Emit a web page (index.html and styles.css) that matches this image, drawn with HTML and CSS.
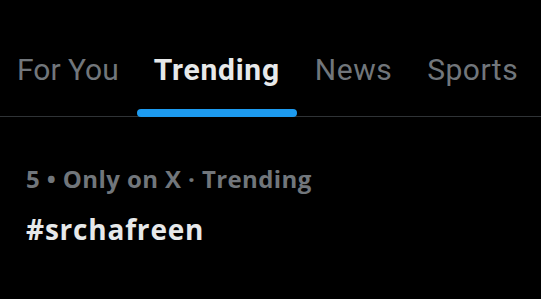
FILE: index.html
```html
<!DOCTYPE html>
<html lang="en">
<head>
<meta charset="utf-8">
<link rel="stylesheet" href="styles.css">
</head>
<body>
<nav class="tabs">
  <div class="tab">For You</div>
  <div class="tab active">Trending<span class="indicator"></span></div>
  <div class="tab">News</div>
  <div class="tab">Sports</div>
</nav>
<section class="trend">
  <div class="meta">5 • Only on X · Trending</div>
  <div class="tag">#srchafreen</div>
</section>
</body>
</html>
```
FILE: styles.css
```css
html, body {
  margin: 0;
  padding: 0;
  background: #000;
}
body {
  font-family: "Open Sans", Roboto, sans-serif;
  width: 541px;
  height: 299px;
  overflow: hidden;
}
.tabs {
  display: flex;
  gap: 35px;
  padding: 0 0 0 17px;
  height: 116px;
  border-bottom: 1px solid #2f3336;
  box-sizing: content-box;
  font-family: Roboto, "Open Sans", sans-serif;
}
.tab {
  position: relative;
  color: #71767b;
  font-size: 30px;
  line-height: 40px;
  padding-top: 50px;
  font-weight: 400;
  letter-spacing: 0.5px;
  white-space: nowrap;
}
.tab:first-child {
  letter-spacing: 0;
}
.tab.active {
  color: #e7e9ea;
  font-weight: 700;
  letter-spacing: 0.75px;
}
.indicator {
  position: absolute;
  left: 50%;
  top: 109px;
  width: 160px;
  height: 8px;
  margin-left: -80px;
  border-radius: 4px;
  background: #1d9bf0;
}
.trend {
  padding: 0 0 0 26px;
}
.meta {
  color: #71767b;
  font-size: 24px;
  font-weight: 700;
  letter-spacing: 0.4px;
  line-height: 30px;
  margin-top: 47px;
}
.tag {
  color: #e7e9ea;
  font-size: 28px;
  font-weight: 700;
  letter-spacing: 0.8px;
  line-height: 38px;
  margin-top: 16px;
}
```
